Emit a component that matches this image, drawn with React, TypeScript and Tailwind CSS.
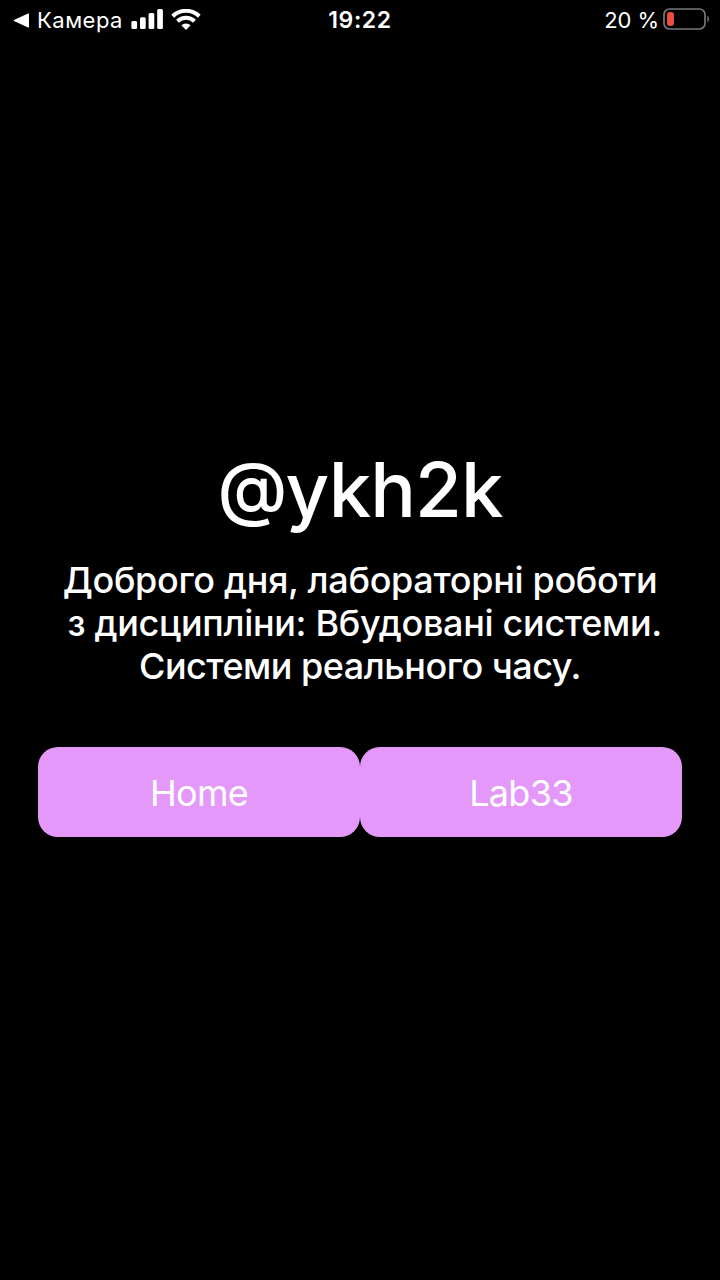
export default function App() {
  return (
    <div className="flex h-[1280px] w-[720px] flex-col overflow-hidden bg-black font-['Inter',sans-serif] text-white">
      <header className="grid h-10 grid-cols-3 items-center pl-[13px] pr-[10px] text-[22px] leading-none">
        <div className="flex items-center">
          <svg className="h-[15px] w-[16px]" viewBox="0 0 16 15" fill="white"><path d="M1 7L15 .5Q16 .2 16 1.2V13.8Q16 14.8 15 14.5L1 8Q0 7.5 1 7Z" /></svg>
          <span className="ml-2 tracking-[0.5px]">Камера</span>
          <svg className="ml-2 mb-0.5 h-5 w-8 shrink-0" viewBox="0 0 32 20" fill="white"><rect x=".4" y="12" width="5.7" height="8" rx="1.5" /><rect x="9" y="8.3" width="5.7" height="11.7" rx="1.5" /><rect x="17.6" y="4" width="5.7" height="16" rx="1.5" /><rect x="26.2" y="0" width="5.7" height="20" rx="1.5" /></svg>
          <svg className="ml-2 mb-px h-[21px] w-[30px] shrink-0" viewBox="0 0 30 21" fill="none" stroke="white" strokeWidth="4"><path d="M1.7 7.2A19 19 0 0 1 28.3 7.2M6.5 12.2A12.3 12.3 0 0 1 23.5 12.2" /><path d="M10.4 16.3A6.5 6.5 0 0 1 19.6 16.3L15 21Z" fill="white" stroke="none" /></svg>
        </div>
        <div className="pr-[3px] text-center text-[23px] font-semibold tracking-[0.6px]">19:22</div>
        <div className="flex items-center justify-end">
          <span className="tracking-[-0.1px]">20 %</span>
          <svg className="ml-1 mb-[3px] h-[22px] w-[47px]" viewBox="0 0 47 22" fill="none"><rect x="1" y="1" width="41" height="20" rx="5.5" stroke="#77777a" strokeWidth="1.7" /><rect x="4" y="4" width="7" height="14" rx="3" fill="#eb4e3d" /><path d="M44.4 7.5Q46 8.5 46 11T44.4 14.5Z" fill="#77777a" /></svg>
        </div>
      </header>
      <main className="flex flex-col items-center pt-[401px]">
        <h1 className="h-24 text-[76px] font-medium leading-[96px] tracking-[-0.9px]"><span className="align-[4px] text-[71px] leading-none tracking-[-1.6px]">@</span>ykh2k</h1>
        <p className="mt-[22px] whitespace-pre text-center text-[36px] font-medium leading-[43px] tracking-[-0.32px]">{"Доброго дня, лабораторні роботи\n з дисципліни: Вбудовані системи.\n"}<span className="tracking-[-0.5px]">Системи реального часу.</span></p>
        <div className="mt-[59px] flex text-[36px] tracking-[-0.7px]">
          <button className="h-[90px] w-[322px] rounded-[20px] bg-[#e499fa] pt-px">Home</button>
          <button className="h-[90px] w-[322px] rounded-[20px] bg-[#e499fa] pt-px">Lab33</button>
        </div>
      </main>
    </div>
  );
}
